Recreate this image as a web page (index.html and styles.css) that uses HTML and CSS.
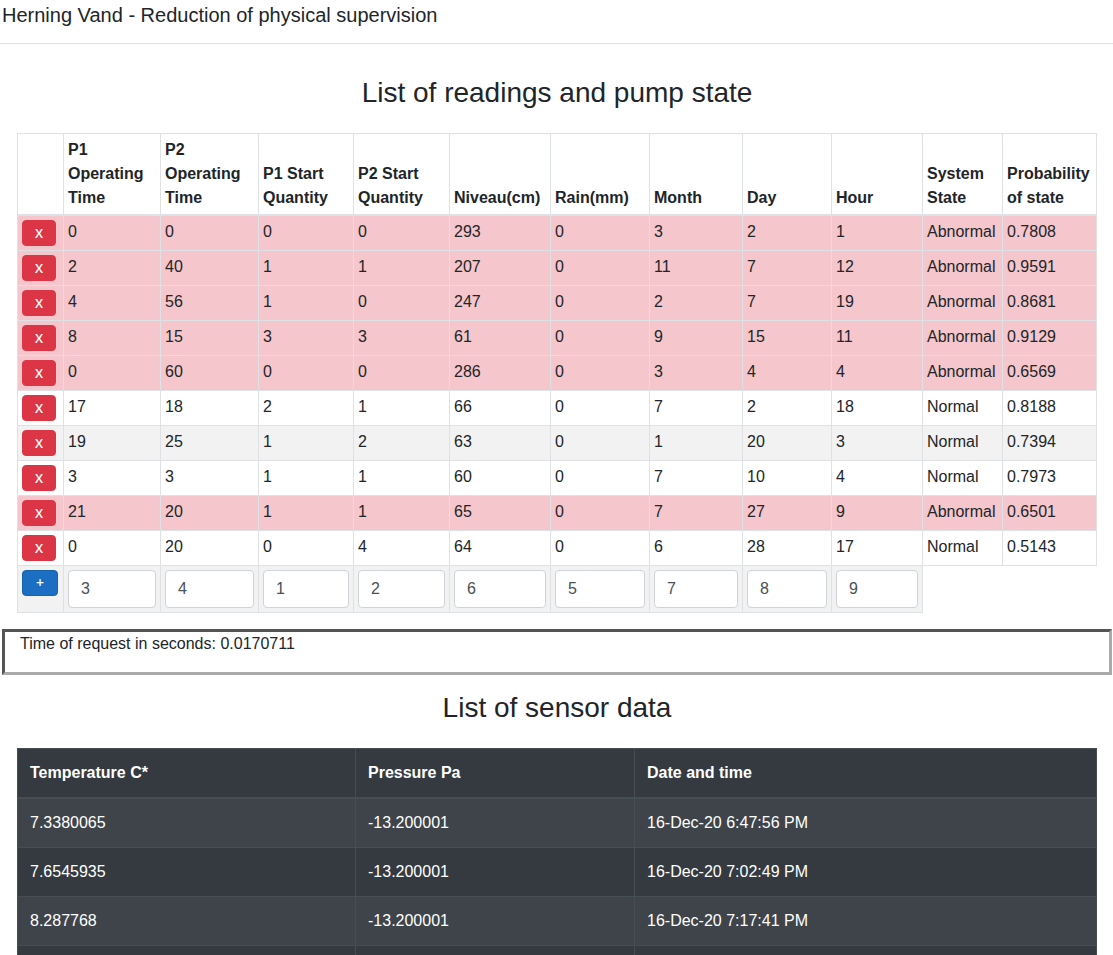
FILE: index.html
```
<!DOCTYPE html>
<html lang="en">
<head>
<meta charset="utf-8">
<title>Herning Vand</title>
<link rel="stylesheet" href="styles.css">
</head>
<body>
<header class="top-bar"><h1 class="app-title">Herning Vand - Reduction of physical supervision</h1></header>
<main>
<section class="panel readings-panel">
<h2 class="panel-title">List of readings and pump state</h2>
<table class="readings">
<colgroup><col class="c-action"><col class="c-op1"><col class="c-op2"><col class="c-start1"><col class="c-start2"><col class="c-level"><col class="c-rain"><col class="c-month"><col class="c-day"><col class="c-hour"><col class="c-state"><col class="c-prob"></colgroup>
<thead>
<tr><th></th><th>P1 Operating Time</th><th>P2 Operating Time</th><th>P1 Start Quantity</th><th>P2 Start Quantity</th><th>Niveau(cm)</th><th>Rain(mm)</th><th>Month</th><th>Day</th><th>Hour</th><th>System State</th><th>Probability of state</th></tr>
</thead>
<tbody>
<tr class="abnormal"><td><button class="btn btn-remove" type="button">X</button></td><td>0</td><td>0</td><td>0</td><td>0</td><td>293</td><td>0</td><td>3</td><td>2</td><td>1</td><td>Abnormal</td><td>0.7808</td></tr>
<tr class="abnormal"><td><button class="btn btn-remove" type="button">X</button></td><td>2</td><td>40</td><td>1</td><td>1</td><td>207</td><td>0</td><td>11</td><td>7</td><td>12</td><td>Abnormal</td><td>0.9591</td></tr>
<tr class="abnormal"><td><button class="btn btn-remove" type="button">X</button></td><td>4</td><td>56</td><td>1</td><td>0</td><td>247</td><td>0</td><td>2</td><td>7</td><td>19</td><td>Abnormal</td><td>0.8681</td></tr>
<tr class="abnormal"><td><button class="btn btn-remove" type="button">X</button></td><td>8</td><td>15</td><td>3</td><td>3</td><td>61</td><td>0</td><td>9</td><td>15</td><td>11</td><td>Abnormal</td><td>0.9129</td></tr>
<tr class="abnormal"><td><button class="btn btn-remove" type="button">X</button></td><td>0</td><td>60</td><td>0</td><td>0</td><td>286</td><td>0</td><td>3</td><td>4</td><td>4</td><td>Abnormal</td><td>0.6569</td></tr>
<tr><td><button class="btn btn-remove" type="button">X</button></td><td>17</td><td>18</td><td>2</td><td>1</td><td>66</td><td>0</td><td>7</td><td>2</td><td>18</td><td>Normal</td><td>0.8188</td></tr>
<tr class="shaded"><td><button class="btn btn-remove" type="button">X</button></td><td>19</td><td>25</td><td>1</td><td>2</td><td>63</td><td>0</td><td>1</td><td>20</td><td>3</td><td>Normal</td><td>0.7394</td></tr>
<tr><td><button class="btn btn-remove" type="button">X</button></td><td>3</td><td>3</td><td>1</td><td>1</td><td>60</td><td>0</td><td>7</td><td>10</td><td>4</td><td>Normal</td><td>0.7973</td></tr>
<tr class="abnormal"><td><button class="btn btn-remove" type="button">X</button></td><td>21</td><td>20</td><td>1</td><td>1</td><td>65</td><td>0</td><td>7</td><td>27</td><td>9</td><td>Abnormal</td><td>0.6501</td></tr>
<tr><td><button class="btn btn-remove" type="button">X</button></td><td>0</td><td>20</td><td>0</td><td>4</td><td>64</td><td>0</td><td>6</td><td>28</td><td>17</td><td>Normal</td><td>0.5143</td></tr>
<tr class="shaded">
<td><button class="btn btn-add" type="button">+</button></td>
<td><input class="field" type="text" value="3" aria-label="P1 Operating Time"></td>
<td><input class="field" type="text" value="4" aria-label="P2 Operating Time"></td>
<td><input class="field" type="text" value="1" aria-label="P1 Start Quantity"></td>
<td><input class="field" type="text" value="2" aria-label="P2 Start Quantity"></td>
<td><input class="field" type="text" value="6" aria-label="Niveau(cm)"></td>
<td><input class="field" type="text" value="5" aria-label="Rain(mm)"></td>
<td><input class="field" type="text" value="7" aria-label="Month"></td>
<td><input class="field" type="text" value="8" aria-label="Day"></td>
<td><input class="field" type="text" value="9" aria-label="Hour"></td>
</tr>
</tbody>
</table>
</section>
<div class="timing">Time of request in seconds: 0.0170711</div>
<section class="panel">
<h2 class="panel-title">List of sensor data</h2>
<table class="sensors">
<colgroup><col class="c-temp"><col class="c-press"><col class="c-date"></colgroup>
<thead><tr><th>Temperature C*</th><th>Pressure Pa</th><th>Date and time</th></tr></thead>
<tbody>
<tr><td>7.3380065</td><td>-13.200001</td><td>16-Dec-20 6:47:56 PM</td></tr>
<tr><td>7.6545935</td><td>-13.200001</td><td>16-Dec-20 7:02:49 PM</td></tr>
<tr><td>8.287768</td><td>-13.200001</td><td>16-Dec-20 7:17:41 PM</td></tr>
<tr><td>&nbsp;</td><td></td><td></td></tr>
</tbody>
</table>
</section>
</main>
</body>
</html>
```
FILE: styles.css
```
*, *::before, *::after { box-sizing: border-box; }
body {
  margin: 0;
  background: #fff;
  color: #212529;
  font-family: "Liberation Sans", Arial, sans-serif;
  font-size: 16px;
  line-height: 24px;
}
.top-bar {
  padding: 3px 2px 16px;
  border-bottom: 1px solid #dee2e6;
}
.app-title { margin: 0; font-size: 20px; font-weight: 400; line-height: 24px; }
.panel { padding: 16px 16px 0 17px; }
.readings-panel { padding-top: 32px; }
.panel-title {
  margin: 0 0 24px;
  font-size: 28px;
  font-weight: 400;
  line-height: 33px;
  text-align: center;
}
table { width: 100%; border-collapse: collapse; table-layout: fixed; }
th, td { text-align: left; vertical-align: top; }
th { vertical-align: bottom; }
.readings th, .readings td { padding: 4px; border: 1px solid #dee2e6; }
.readings thead th { border-bottom-width: 2px; }
.abnormal { background: #f5c6cb; }
.shaded { background: #f2f2f2; }
.c-action { width: 46px; }
.c-op1 { width: 97px; }
.c-op2 { width: 98px; }
.c-start1 { width: 95px; }
.c-start2 { width: 96px; }
.c-level { width: 101px; }
.c-rain { width: 99px; }
.c-month { width: 93px; }
.c-day { width: 89px; }
.c-hour { width: 91px; }
.c-state { width: 80px; }
.c-prob { width: 94px; }
.btn {
  display: block;
  height: 26px;
  padding: 0;
  border: 1px solid;
  border-radius: 4px;
  color: #fff;
}
.btn-remove {
  width: 34px;
  padding-top: 1px;
  background: #dc3545;
  border-color: #dc3545;
  font: 600 13px/23px "Open Sans", sans-serif;
}
.btn-add {
  width: 36px;
  background: #1b6ec2;
  border-color: #1861ac;
  font: 600 14px/24px "Open Sans", sans-serif;
}
.field {
  display: block;
  width: 100%;
  height: 38px;
  padding: 6px 12px;
  border: 1px solid #ced4da;
  border-radius: 4px;
  background: #fff;
  color: #495057;
  font: inherit;
}
.timing {
  min-height: 46px;
  margin: 16px 1px 0 2px;
  padding: 0 15px;
  border: 3px solid;
  border-color: #555 #aaa #aaa #555;
}
.sensors { background: #343a40; color: #fff; }
.sensors th, .sensors td { padding: 12px; border: 1px solid #454d55; }
.sensors thead th { border-bottom-width: 2px; }
.sensors tbody tr:nth-child(odd) { background: #3e444a; }
.c-temp { width: 338px; }
.c-press { width: 279px; }
.c-date { width: 462px; }
```
